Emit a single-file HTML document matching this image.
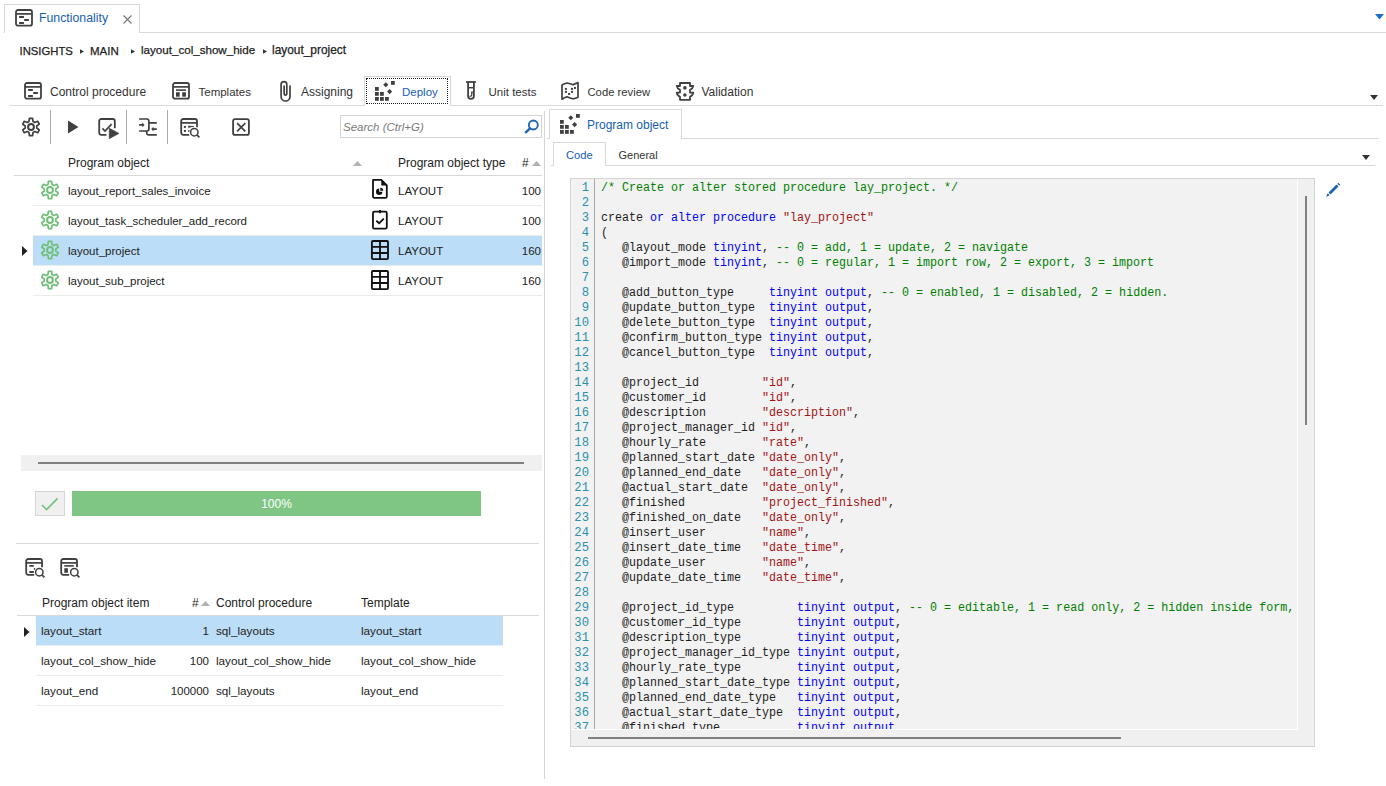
<!DOCTYPE html>
<html><head><meta charset="utf-8">
<style>
*{box-sizing:border-box;margin:0;padding:0}
html,body{width:1386px;height:786px;overflow:hidden;background:#fff}
body{position:relative;font-family:"Liberation Sans",sans-serif;font-size:12px;color:#333}
.a{position:absolute}
.t{position:absolute;white-space:nowrap;line-height:16px}
svg{position:absolute;overflow:visible}
.ln,.src{position:absolute;font-family:"Liberation Mono",monospace;line-height:15px;white-space:pre}
.src{font-size:12.5px;transform:scaleX(0.93333);transform-origin:0 0}
.ln{font-size:12.2px}
.ln{color:#2b91af;text-align:right}
.src{color:#1e1e1e}
.k{color:#0000ff}.c{color:#008000}.s{color:#a31515}
</style></head><body>

<div class="a" style="left:4px;top:4px;width:136px;height:29px;border:1px solid #d9d9d9;border-bottom:none;background:#fff"></div>
<div class="a" style="left:140px;top:32px;width:1246px;height:1px;background:#d9d9d9"></div>
<div class="t " style="left:39px;top:9.74px;font-size:12.3px;color:#1560b5;">Functionality</div>
<svg style="left:123px;top:15px" width="10" height="9" viewBox="0 0 10 9">
<path d="M0.5 0.5L8.5 8.5M8.5 0.5L0.5 8.5" stroke="#777" stroke-width="1.1"/></svg>
<svg style="left:1375px;top:13.5px" width="9" height="6" viewBox="0 0 9 6"><path d="M0 0H9L4.5 5.5Z" fill="#1b6fc8"/></svg>
<div class="t " style="left:19.5px;top:42.58px;font-size:11.3px;color:#222;-webkit-text-stroke:0.25px #222;">INSIGHTS</div>
<svg style="left:80px;top:48.5px" width="5" height="5" viewBox="0 0 5 5"><path d="M0 0.2L4 2.5L0 4.8Z" fill="#333"/></svg>
<div class="t " style="left:90px;top:42.52px;font-size:11.5px;color:#222;-webkit-text-stroke:0.25px #222;">MAIN</div>
<svg style="left:131px;top:48.5px" width="5" height="5" viewBox="0 0 5 5"><path d="M0 0.2L4 2.5L0 4.8Z" fill="#333"/></svg>
<div class="t " style="left:141px;top:42.48px;font-size:11.6px;color:#222;-webkit-text-stroke:0.25px #222;">layout_col_show_hide</div>
<svg style="left:263px;top:48.5px" width="5" height="5" viewBox="0 0 5 5"><path d="M0 0.2L4 2.5L0 4.8Z" fill="#333"/></svg>
<div class="t " style="left:272px;top:42.38px;font-size:11.9px;color:#222;-webkit-text-stroke:0.25px #222;">layout_project</div>
<div class="a" style="left:10px;top:105px;width:354px;height:1px;background:#d9d9d9"></div>
<div class="a" style="left:451px;top:105px;width:932px;height:1px;background:#d9d9d9"></div>
<div class="a" style="left:364px;top:76px;width:87px;height:30px;border:1px solid #d9d9d9;border-bottom:none;background:#fff"></div>
<div class="a" style="left:366px;top:78px;width:82px;height:26px;border:1px dotted #222"></div>
<svg style="left:1370px;top:94.5px" width="8" height="5" viewBox="0 0 8 5"><path d="M0 0H8L4 5Z" fill="#333"/></svg>
<svg style="left:15px;top:9px" width="18" height="18" viewBox="0 0 18 18"><rect x="1" y="1" width="16" height="15.7" rx="2" fill="none" stroke="#404040" stroke-width="1.8"/><path d="M1 4.9H17" stroke="#404040" stroke-width="1.7"/><path d="M4.1 8H8.9M9.2 11H13.9M4.1 14H8.9" stroke="#404040" stroke-width="1.8"/></svg>
<svg style="left:24px;top:82px" width="18" height="18" viewBox="0 0 18 18"><rect x="1" y="1" width="16" height="15.7" rx="2" fill="none" stroke="#404040" stroke-width="1.8"/><path d="M1 4.9H17" stroke="#404040" stroke-width="1.7"/><path d="M4.1 8H8.9M9.2 11H13.9M4.1 14H8.9" stroke="#404040" stroke-width="1.8"/></svg>
<div class="t " style="left:50px;top:83.84px;font-size:12px;color:#333;">Control procedure</div>
<svg style="left:172px;top:82px" width="18" height="18" viewBox="0 0 18 18"><rect x="1" y="1" width="16" height="15.7" rx="2" fill="none" stroke="#404040" stroke-width="1.8"/><path d="M1 4.9H17" stroke="#404040" stroke-width="1.7"/><rect x="4" y="7.3" width="10" height="1.6" fill="#404040"/><rect x="4" y="10.2" width="3.7" height="4.5" fill="#404040"/><rect x="10.2" y="10.2" width="3.7" height="4.5" fill="#404040"/></svg>
<div class="t " style="left:198.5px;top:84.02px;font-size:11.5px;color:#333;">Templates</div>
<svg style="left:278px;top:78px" width="14" height="25" viewBox="0 0 14 25"><path d="M6.15 7.5V15.9A1.33 1.33 0 0 0 8.8 15.9V6.45A2.85 2.85 0 0 0 3.1 6.45V18.55A4.45 4.45 0 0 0 12 18.55V7.5" fill="none" stroke="#404040" stroke-width="1.7"/></svg>
<div class="t " style="left:301px;top:83.84px;font-size:12px;color:#333;">Assigning</div>
<svg style="left:375px;top:81px" width="20" height="20" viewBox="0 0 20 20"><rect x="0" y="16" width="3.8" height="3.8" fill="#404040"/><rect x="5" y="16" width="3.8" height="3.8" fill="#404040"/><rect x="10" y="16" width="3.8" height="3.8" fill="#404040"/><rect x="0" y="11" width="3.8" height="3.8" fill="#404040"/><rect x="5" y="11" width="3.8" height="3.8" fill="#404040"/><rect x="0" y="6" width="3.8" height="3.8" fill="#404040"/><rect x="16" y="0" width="3.8" height="3.8" fill="#404040"/><rect x="9" y="2" width="3.6" height="3.6" fill="#404040" transform="rotate(45 10.8 3.8)"/><rect x="12.8" y="8.8" width="3.6" height="3.6" fill="#404040" transform="rotate(45 14.6 10.6)"/></svg>
<div class="t " style="left:402px;top:84.02px;font-size:11.5px;color:#1560b5;">Deploy</div>
<svg style="left:464px;top:79px" width="14" height="22" viewBox="0 0 14 22"><path d="M2.1 3H11.9" stroke="#404040" stroke-width="1.8"/><path d="M4.1 3V17A2.9 2.9 0 0 0 9.9 17V3" fill="none" stroke="#404040" stroke-width="1.8"/><path d="M4.1 8.7H9.9" stroke="#404040" stroke-width="1.5"/><path d="M7 13.1H8.9M7.8 13.1V16Q7.6 17.3 5.6 17.3" fill="none" stroke="#404040" stroke-width="1.3"/></svg>
<div class="t " style="left:488.5px;top:84.02px;font-size:11.5px;color:#333;">Unit tests</div>
<svg style="left:557px;top:78px" width="24" height="24" viewBox="0 0 24 24"><path d="M5 7.1Q7.5 5.6 10.1 5Q13 5.6 16 6.8Q18.5 5.5 21 4.6V19.2Q18.5 20.3 16 20.8Q13 20 10.1 18.7Q7.5 19.6 5 21.2Z" fill="none" stroke="#404040" stroke-width="1.7" stroke-linejoin="round"/><rect x="7.90" y="9.90" width="2" height="2" fill="#404040"/><rect x="7.90" y="12.90" width="2" height="2" fill="#404040"/><rect x="11.10" y="15.00" width="2" height="2" fill="#404040"/><rect x="14.05" y="9.90" width="2" height="2" fill="#404040"/><rect x="14.05" y="12.90" width="2" height="2" fill="#404040"/><rect x="17.00" y="8.90" width="2" height="2" fill="#404040"/></svg>
<div class="t " style="left:587.5px;top:84.10px;font-size:11.25px;color:#333;">Code review</div>
<svg style="left:672px;top:78px" width="26" height="26" viewBox="0 0 26 26"><path d="M8 5H18V8H21.25Q20.9 10.6 18 11.9V14.6H21.25Q20.9 17.4 18 18.7V21.8H8V18.7Q5.1 17.4 4.75 14.6H8V11.9Q5.1 10.6 4.75 8H8Z" fill="none" stroke="#404040" stroke-width="1.8" stroke-linejoin="round"/><circle cx="12.9" cy="9.9" r="1.8" fill="#404040"/><circle cx="12.9" cy="17" r="1.8" fill="#404040"/></svg>
<div class="t " style="left:701.5px;top:83.84px;font-size:12px;color:#333;">Validation</div>
<svg style="left:21px;top:117px" width="20" height="20" viewBox="0 0 20 20"><path d="M8.00 4.46 L8.40 1.35 L11.60 1.35 L12.00 4.46 L13.80 5.50 L16.69 4.29 L18.29 7.06 L15.80 8.96 L15.80 11.04 L18.29 12.94 L16.69 15.71 L13.80 14.50 L12.00 15.54 L11.60 18.65 L8.40 18.65 L8.00 15.54 L6.20 14.50 L3.31 15.71 L1.71 12.94 L4.20 11.04 L4.20 8.96 L1.71 7.06 L3.31 4.29 L6.20 5.50Z" fill="none" stroke="#404040" stroke-width="1.7" stroke-linejoin="round"/><circle cx="10" cy="10" r="2.9" fill="none" stroke="#404040" stroke-width="2"/></svg>
<div class="a" style="left:50px;top:110px;width:1px;height:34px;background:#a8a8a8"></div>
<svg style="left:67px;top:120px" width="12" height="15" viewBox="0 0 12 15"><path d="M1 0.5 L11.5 7 L1 13.5Z" fill="#404040"/></svg>
<svg style="left:94px;top:114px" width="28" height="28" viewBox="0 0 28 28"><path d="M12.5 20.8H7.2A2 2 0 0 1 5.2 18.8V7A2 2 0 0 1 7.2 5H18.8A2 2 0 0 1 20.8 7V14.3" fill="none" stroke="#404040" stroke-width="1.8"/><path d="M8.4 14.4L11 17.1L17.6 10.2" fill="none" stroke="#404040" stroke-width="1.7"/><path d="M15.3 14.3L15.3 24.6L24.8 19.4Z" fill="#404040" stroke="#404040" stroke-width="0.8" stroke-linejoin="round"/></svg>
<div class="a" style="left:126px;top:110px;width:1px;height:34px;background:#a8a8a8"></div>
<svg style="left:134px;top:114px" width="26" height="26" viewBox="0 0 26 26"><path d="M5.1 5H13A1.9 1.9 0 0 1 14.9 6.9V15.1A1.9 1.9 0 0 1 13 17H5.1M14.9 8.9H22.8M12.7 17V19A1.9 1.9 0 0 0 14.6 20.9H22.8M5.1 10.9H9M22.8 15.1H18.5" fill="none" stroke="#404040" stroke-width="1.7"/><path d="M8.3 8.6L10.6 10.9L8.3 13.2Z M19.5 12.8L17.2 15.1L19.5 17.4Z" fill="#404040"/></svg>
<div class="a" style="left:167px;top:110px;width:1px;height:34px;background:#a8a8a8"></div>
<svg style="left:176px;top:114px" width="26" height="26" viewBox="0 0 26 26"><path d="M13.2 20.8H7.2A2 2 0 0 1 5.2 18.8V7A2 2 0 0 1 7.2 5H19A2 2 0 0 1 21 7V13.2" fill="none" stroke="#404040" stroke-width="1.8"/><path d="M5.2 8.9H21" stroke="#404040" stroke-width="1.7"/><circle cx="18.3" cy="18.2" r="3.7" fill="none" stroke="#404040" stroke-width="1.5"/><path d="M20.9 20.8L23.4 23.3" stroke="#404040" stroke-width="1.7"/><rect x="7.9" y="11.9" width="2" height="2" fill="#404040"/><rect x="7.9" y="16" width="2" height="2" fill="#404040"/><rect x="12.1" y="11.8" width="2.5" height="1.8" fill="#404040"/><path d="M12.1 12.5H17.8" stroke="#404040" stroke-width="1.1"/><rect x="12.2" y="16" width="1.2" height="2" fill="#404040"/></svg>
<svg style="left:226px;top:112px" width="30" height="30" viewBox="0 0 30 30"><rect x="7.1" y="7.1" width="15.8" height="15.8" rx="2" fill="none" stroke="#404040" stroke-width="1.8"/><path d="M11.1 11.1L19.3 19.3M19.3 11.1L11.1 19.3" stroke="#404040" stroke-width="1.7"/></svg>
<div class="a" style="left:340px;top:115px;width:202px;height:23px;border:1px solid #d4d4d4;background:#fff"></div>
<div class="t" style="left:343px;top:118.5px;font-size:11.5px;font-style:italic;color:#7a7a7a">Search (Ctrl+G)</div>
<svg style="left:524px;top:119px" width="15" height="15" viewBox="0 0 15 15"><circle cx="9.3" cy="6" r="4.5" fill="none" stroke="#1f63b0" stroke-width="1.8"/><path d="M6 9.3 L1.8 13.3" stroke="#1f63b0" stroke-width="2.3" stroke-linecap="round"/></svg>
<div class="t " style="left:68px;top:154.84px;font-size:12px;color:#222;">Program object</div>
<svg style="left:353px;top:160.5px" width="9" height="5" viewBox="0 0 9 5"><path d="M0 5 L4.5 0 L9 5Z" fill="#b0b0b0"/></svg>
<div class="t " style="left:398px;top:154.84px;font-size:12px;color:#222;">Program object type</div>
<div class="t " style="left:522px;top:154.84px;font-size:12px;color:#222;">#</div>
<svg style="left:532px;top:160.5px" width="9" height="5" viewBox="0 0 9 5"><path d="M0 5 L4.5 0 L9 5Z" fill="#b0b0b0"/></svg>
<div class="a" style="left:14px;top:175px;width:528px;height:1px;background:#d9d9d9"></div>
<div class="a" style="left:33px;top:205px;width:509px;height:1px;background:#ebebeb"></div>
<svg style="left:40px;top:180px" width="20" height="20" viewBox="0 0 20 20"><path d="M8.00 4.46 L8.40 1.35 L11.60 1.35 L12.00 4.46 L13.80 5.50 L16.69 4.29 L18.29 7.06 L15.80 8.96 L15.80 11.04 L18.29 12.94 L16.69 15.71 L13.80 14.50 L12.00 15.54 L11.60 18.65 L8.40 18.65 L8.00 15.54 L6.20 14.50 L3.31 15.71 L1.71 12.94 L4.20 11.04 L4.20 8.96 L1.71 7.06 L3.31 4.29 L6.20 5.50Z" fill="none" stroke="#6fbf77" stroke-width="1.7" stroke-linejoin="round"/><circle cx="10" cy="10" r="2.9" fill="none" stroke="#6fbf77" stroke-width="2"/></svg>
<div class="t " style="left:68px;top:183.02px;font-size:11.5px;color:#222;">layout_report_sales_invoice</div>
<svg style="left:370px;top:177px" width="20" height="24" viewBox="0 0 20 24"><path d="M3 2.9H11.3L16.8 8.4V19.4A1.4 1.4 0 0 1 15.4 20.8H4.4A1.4 1.4 0 0 1 3 19.4V4.3A1.4 1.4 0 0 1 4.4 2.9Z" fill="none" stroke="#111" stroke-width="1.8" stroke-linejoin="round"/><path d="M11.3 2.2L17.6 8.6H11.3Z" fill="#111"/><path d="M9.2 11.6A3.2 3.2 0 1 0 12.4 14.8H9.2Z" fill="#111"/><path d="M10.3 10.8A3.2 3.2 0 0 1 13.3 13.8H10.3Z" fill="#111"/></svg>
<div class="t " style="left:398px;top:183.02px;font-size:11.5px;color:#222;">LAYOUT</div>
<div class="t" style="left:480px;width:61px;text-align:right;top:183.02px;font-size:11.5px;color:#222">100</div>
<div class="a" style="left:33px;top:235px;width:509px;height:1px;background:#ebebeb"></div>
<svg style="left:40px;top:210px" width="20" height="20" viewBox="0 0 20 20"><path d="M8.00 4.46 L8.40 1.35 L11.60 1.35 L12.00 4.46 L13.80 5.50 L16.69 4.29 L18.29 7.06 L15.80 8.96 L15.80 11.04 L18.29 12.94 L16.69 15.71 L13.80 14.50 L12.00 15.54 L11.60 18.65 L8.40 18.65 L8.00 15.54 L6.20 14.50 L3.31 15.71 L1.71 12.94 L4.20 11.04 L4.20 8.96 L1.71 7.06 L3.31 4.29 L6.20 5.50Z" fill="none" stroke="#6fbf77" stroke-width="1.7" stroke-linejoin="round"/><circle cx="10" cy="10" r="2.9" fill="none" stroke="#6fbf77" stroke-width="2"/></svg>
<div class="t " style="left:68px;top:213.02px;font-size:11.5px;color:#222;">layout_task_scheduler_add_record</div>
<svg style="left:370px;top:208px" width="20" height="24" viewBox="0 0 20 24"><rect x="2.95" y="3.7" width="13.85" height="17" rx="1.5" fill="none" stroke="#111" stroke-width="1.8"/><rect x="9" y="2" width="2" height="3.2" fill="#111"/><path d="M6.3 12.7L9.2 15.2L13.8 10.6" fill="none" stroke="#111" stroke-width="1.8"/></svg>
<div class="t " style="left:398px;top:213.02px;font-size:11.5px;color:#222;">LAYOUT</div>
<div class="t" style="left:480px;width:61px;text-align:right;top:213.02px;font-size:11.5px;color:#222">100</div>
<div class="a" style="left:33px;top:236px;width:509px;height:29px;background:#bbddf7"></div>
<svg style="left:22px;top:246px" width="6" height="10" viewBox="0 0 6 10"><path d="M0 0 L5.5 5 L0 10Z" fill="#222"/></svg>
<div class="a" style="left:33px;top:265px;width:509px;height:1px;background:#ebebeb"></div>
<svg style="left:40px;top:240px" width="20" height="20" viewBox="0 0 20 20"><path d="M8.00 4.46 L8.40 1.35 L11.60 1.35 L12.00 4.46 L13.80 5.50 L16.69 4.29 L18.29 7.06 L15.80 8.96 L15.80 11.04 L18.29 12.94 L16.69 15.71 L13.80 14.50 L12.00 15.54 L11.60 18.65 L8.40 18.65 L8.00 15.54 L6.20 14.50 L3.31 15.71 L1.71 12.94 L4.20 11.04 L4.20 8.96 L1.71 7.06 L3.31 4.29 L6.20 5.50Z" fill="none" stroke="#6fbf77" stroke-width="1.7" stroke-linejoin="round"/><circle cx="10" cy="10" r="2.9" fill="none" stroke="#6fbf77" stroke-width="2"/></svg>
<div class="t " style="left:68px;top:243.02px;font-size:11.5px;color:#222;">layout_project</div>
<svg style="left:370px;top:238px" width="20" height="24" viewBox="0 0 20 24"><rect x="1.9" y="3" width="16.1" height="18.1" rx="1" fill="none" stroke="#111" stroke-width="1.85"/><path d="M10 3V21.1M1.9 8.9H18M1.9 15H18" stroke="#111" stroke-width="1.85"/></svg>
<div class="t " style="left:398px;top:243.02px;font-size:11.5px;color:#222;">LAYOUT</div>
<div class="t" style="left:480px;width:61px;text-align:right;top:243.02px;font-size:11.5px;color:#222">160</div>
<div class="a" style="left:33px;top:295px;width:509px;height:1px;background:#ebebeb"></div>
<svg style="left:40px;top:270px" width="20" height="20" viewBox="0 0 20 20"><path d="M8.00 4.46 L8.40 1.35 L11.60 1.35 L12.00 4.46 L13.80 5.50 L16.69 4.29 L18.29 7.06 L15.80 8.96 L15.80 11.04 L18.29 12.94 L16.69 15.71 L13.80 14.50 L12.00 15.54 L11.60 18.65 L8.40 18.65 L8.00 15.54 L6.20 14.50 L3.31 15.71 L1.71 12.94 L4.20 11.04 L4.20 8.96 L1.71 7.06 L3.31 4.29 L6.20 5.50Z" fill="none" stroke="#6fbf77" stroke-width="1.7" stroke-linejoin="round"/><circle cx="10" cy="10" r="2.9" fill="none" stroke="#6fbf77" stroke-width="2"/></svg>
<div class="t " style="left:68px;top:273.02px;font-size:11.5px;color:#222;">layout_sub_project</div>
<svg style="left:370px;top:268px" width="20" height="24" viewBox="0 0 20 24"><rect x="1.9" y="3" width="16.1" height="18.1" rx="1" fill="none" stroke="#111" stroke-width="1.85"/><path d="M10 3V21.1M1.9 8.9H18M1.9 15H18" stroke="#111" stroke-width="1.85"/></svg>
<div class="t " style="left:398px;top:273.02px;font-size:11.5px;color:#222;">LAYOUT</div>
<div class="t" style="left:480px;width:61px;text-align:right;top:273.02px;font-size:11.5px;color:#222">160</div>
<div class="a" style="left:544px;top:111px;width:1px;height:668px;background:#d4d4d4"></div>
<div class="a" style="left:21px;top:455px;width:521px;height:16px;background:#f0f0f0"></div>
<div class="a" style="left:38px;top:462px;width:486px;height:2.3px;background:#808080"></div>
<div class="a" style="left:35px;top:491px;width:30px;height:25px;background:#f0f0f0;border:1px solid #d6d6d6"></div>
<svg style="left:41px;top:497px" width="18" height="14" viewBox="0 0 18 14"><path d="M1 8L5.6 12.6L16.6 1.4" fill="none" stroke="#77c47f" stroke-width="1.7"/></svg>
<div class="a" style="left:72px;top:491px;width:409px;height:25px;background:#7fc685"></div>
<div class="t" style="left:72px;width:409px;text-align:center;top:495.84px;font-size:12px;color:#fff">100%</div>
<div class="a" style="left:16px;top:543px;width:523px;height:1px;background:#d9d9d9"></div>
<svg style="left:21px;top:554px" width="26" height="26" viewBox="0 0 26 26"><path d="M13.2 20.8H7.2A2 2 0 0 1 5.2 18.8V7A2 2 0 0 1 7.2 5H19A2 2 0 0 1 21 7V13.2" fill="none" stroke="#404040" stroke-width="1.8"/><path d="M5.2 8.9H21" stroke="#404040" stroke-width="1.7"/><circle cx="18.3" cy="18.2" r="3.7" fill="none" stroke="#404040" stroke-width="1.5"/><path d="M20.9 20.8L23.4 23.3" stroke="#404040" stroke-width="1.7"/><path d="M8.3 11.9H12.8M8.3 18H12.8" stroke="#404040" stroke-width="1.8"/><rect x="12.9" y="14" width="1.2" height="1.8" fill="#404040"/></svg>
<svg style="left:56px;top:554px" width="26" height="26" viewBox="0 0 26 26"><path d="M13.2 20.8H7.2A2 2 0 0 1 5.2 18.8V7A2 2 0 0 1 7.2 5H19A2 2 0 0 1 21 7V13.2" fill="none" stroke="#404040" stroke-width="1.8"/><path d="M5.2 8.9H21" stroke="#404040" stroke-width="1.7"/><circle cx="18.3" cy="18.2" r="3.7" fill="none" stroke="#404040" stroke-width="1.5"/><path d="M20.9 20.8L23.4 23.3" stroke="#404040" stroke-width="1.7"/><path d="M8.3 11.9H17.8" stroke="#404040" stroke-width="1.6"/><rect x="8.3" y="14.2" width="3.6" height="4.6" fill="#404040"/></svg>
<div class="t " style="left:42px;top:594.84px;font-size:12px;color:#222;">Program object item</div>
<div class="t " style="left:192px;top:594.84px;font-size:12px;color:#222;">#</div>
<svg style="left:200.5px;top:600.5px" width="8" height="5" viewBox="0 0 8 5"><path d="M0 5 L4.5 0 L9 5Z" fill="#b0b0b0"/></svg>
<div class="t " style="left:216px;top:594.84px;font-size:12px;color:#222;">Control procedure</div>
<div class="t " style="left:361px;top:594.84px;font-size:12px;color:#222;">Template</div>
<div class="a" style="left:17px;top:615px;width:522px;height:1px;background:#d9d9d9"></div>
<div class="a" style="left:36px;top:616px;width:467px;height:29px;background:#bbddf7"></div>
<svg style="left:24px;top:627px" width="6" height="10" viewBox="0 0 6 10"><path d="M0 0 L5.5 5 L0 10Z" fill="#222"/></svg>
<div class="a" style="left:36px;top:645px;width:467px;height:1px;background:#ebebeb"></div>
<div class="t " style="left:41px;top:622.95px;font-size:11.7px;color:#222;">layout_start</div>
<div class="t" style="left:141px;width:68px;text-align:right;top:623.02px;font-size:11.5px;color:#222">1</div>
<div class="t " style="left:216px;top:622.95px;font-size:11.7px;color:#222;">sql_layouts</div>
<div class="t " style="left:361px;top:622.95px;font-size:11.7px;color:#222;">layout_start</div>
<div class="a" style="left:36px;top:675px;width:467px;height:1px;background:#ebebeb"></div>
<div class="t " style="left:41px;top:652.95px;font-size:11.7px;color:#222;">layout_col_show_hide</div>
<div class="t" style="left:141px;width:68px;text-align:right;top:653.02px;font-size:11.5px;color:#222">100</div>
<div class="t " style="left:216px;top:652.95px;font-size:11.7px;color:#222;">layout_col_show_hide</div>
<div class="t " style="left:361px;top:652.95px;font-size:11.7px;color:#222;">layout_col_show_hide</div>
<div class="a" style="left:36px;top:705px;width:467px;height:1px;background:#ebebeb"></div>
<div class="t " style="left:41px;top:682.95px;font-size:11.7px;color:#222;">layout_end</div>
<div class="t" style="left:141px;width:68px;text-align:right;top:683.02px;font-size:11.5px;color:#222">100000</div>
<div class="t " style="left:216px;top:682.95px;font-size:11.7px;color:#222;">sql_layouts</div>
<div class="t " style="left:361px;top:682.95px;font-size:11.7px;color:#222;">layout_end</div>
<div class="a" style="left:547px;top:138px;width:832px;height:1px;background:#d9d9d9"></div>
<div class="a" style="left:549px;top:109px;width:133px;height:30px;border:1px solid #d9d9d9;border-bottom:none;background:#fff"></div>
<svg style="left:560px;top:114px" width="20" height="20" viewBox="0 0 20 20"><rect x="0" y="16" width="3.8" height="3.8" fill="#404040"/><rect x="5" y="16" width="3.8" height="3.8" fill="#404040"/><rect x="10" y="16" width="3.8" height="3.8" fill="#404040"/><rect x="0" y="11" width="3.8" height="3.8" fill="#404040"/><rect x="5" y="11" width="3.8" height="3.8" fill="#404040"/><rect x="0" y="6" width="3.8" height="3.8" fill="#404040"/><rect x="16" y="0" width="3.8" height="3.8" fill="#404040"/><rect x="9" y="2" width="3.6" height="3.6" fill="#404040" transform="rotate(45 10.8 3.8)"/><rect x="12.8" y="8.8" width="3.6" height="3.6" fill="#404040" transform="rotate(45 14.6 10.6)"/></svg>
<div class="t " style="left:587px;top:116.84px;font-size:12px;color:#1560b5;">Program object</div>
<div class="a" style="left:551px;top:165px;width:824px;height:1px;background:#d9d9d9"></div>
<div class="a" style="left:553px;top:142px;width:53px;height:24px;border:1px solid #d9d9d9;border-bottom:none;background:#fff"></div>
<div class="t " style="left:566px;top:147.12px;font-size:11.2px;color:#1560b5;">Code</div>
<div class="t " style="left:618.5px;top:147.19px;font-size:11px;color:#333;">General</div>
<svg style="left:1362px;top:155px" width="8" height="5" viewBox="0 0 8 5"><path d="M0 0H8L4 5Z" fill="#333"/></svg>
<div class="a" style="left:570px;top:178px;width:745px;height:569px;border:1px solid #d4d4d4;background:#f2f2f2"></div>
<div class="a" style="left:594px;top:179px;width:1px;height:550px;background:#a8a8a8"></div>
<div class="a" style="left:1297px;top:179px;width:1px;height:551px;background:#fff"></div>
<div class="a" style="left:571px;top:729px;width:727px;height:1px;background:#fff"></div>
<div class="a" style="left:1298px;top:179px;width:16px;height:551px;background:#f0f0f0"></div>
<div class="a" style="left:1305px;top:196px;width:2.2px;height:229px;background:#808080"></div>
<div class="a" style="left:571px;top:730px;width:743px;height:16px;background:#f0f0f0"></div>
<div class="a" style="left:588px;top:737px;width:533px;height:2.2px;background:#808080"></div>
<svg style="left:1325px;top:182px" width="16" height="16" viewBox="0 0 16 16"><path d="M3.5 10.5 L11.5 2.5 L13.5 4.5 L5.5 12.5 Z" fill="#1f63b0"/><path d="M2.7 11.3 L4.7 13.3 L1 15 Z" fill="#1f63b0"/><path d="M12.3 1.7 L13.3 0.7 L15.3 2.7 L14.3 3.7Z" fill="#1f63b0"/></svg>
<div class="a" style="left:571px;top:179px;width:726px;height:550px;overflow:hidden">
<div class="ln" style="left:0px;top:2.00px;width:18px">1
2
3
4
5
6
7
8
9
10
11
12
13
14
15
16
17
18
19
20
21
22
23
24
25
26
27
28
29
30
31
32
33
34
35
36
37</div>
<div class="src" style="left:30px;top:2.00px"><span class="c">/* Create or alter stored procedure lay_project. */</span>

create <span class="k">or</span> <span class="k">alter</span> <span class="k">procedure</span> <span class="s">"lay_project"</span>
(
   @layout_mode <span class="k">tinyint</span>, <span class="c">-- 0 = add, 1 = update, 2 = navigate</span>
   @import_mode <span class="k">tinyint</span>, <span class="c">-- 0 = regular, 1 = import row, 2 = export, 3 = import</span>

   @add_button_type     <span class="k">tinyint</span> <span class="k">output</span>, <span class="c">-- 0 = enabled, 1 = disabled, 2 = hidden.</span>
   @update_button_type  <span class="k">tinyint</span> <span class="k">output</span>,
   @delete_button_type  <span class="k">tinyint</span> <span class="k">output</span>,
   @confirm_button_type <span class="k">tinyint</span> <span class="k">output</span>,
   @cancel_button_type  <span class="k">tinyint</span> <span class="k">output</span>,

   @project_id         <span class="s">"id"</span>,
   @customer_id        <span class="s">"id"</span>,
   @description        <span class="s">"description"</span>,
   @project_manager_id <span class="s">"id"</span>,
   @hourly_rate        <span class="s">"rate"</span>,
   @planned_start_date <span class="s">"date_only"</span>,
   @planned_end_date   <span class="s">"date_only"</span>,
   @actual_start_date  <span class="s">"date_only"</span>,
   @finished           <span class="s">"project_finished"</span>,
   @finished_on_date   <span class="s">"date_only"</span>,
   @insert_user        <span class="s">"name"</span>,
   @insert_date_time   <span class="s">"date_time"</span>,
   @update_user        <span class="s">"name"</span>,
   @update_date_time   <span class="s">"date_time"</span>,

   @project_id_type         <span class="k">tinyint</span> <span class="k">output</span>, <span class="c">-- 0 = editable, 1 = read only, 2 = hidden inside form,</span>
   @customer_id_type        <span class="k">tinyint</span> <span class="k">output</span>,
   @description_type        <span class="k">tinyint</span> <span class="k">output</span>,
   @project_manager_id_type <span class="k">tinyint</span> <span class="k">output</span>,
   @hourly_rate_type        <span class="k">tinyint</span> <span class="k">output</span>,
   @planned_start_date_type <span class="k">tinyint</span> <span class="k">output</span>,
   @planned_end_date_type   <span class="k">tinyint</span> <span class="k">output</span>,
   @actual_start_date_type  <span class="k">tinyint</span> <span class="k">output</span>,
   @finished_type           <span class="k">tinyint</span> <span class="k">output</span>,</div>
</div>
</body></html>
